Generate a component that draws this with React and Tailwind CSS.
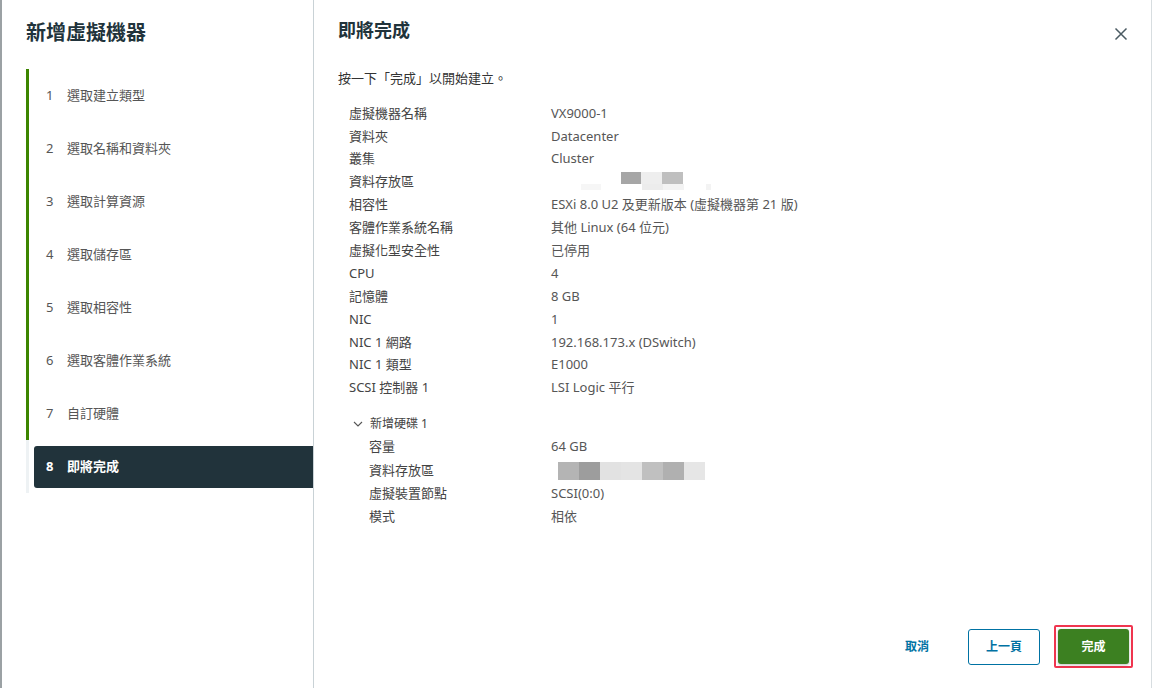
import React from 'react'

const steps = [
  '選取建立類型',
  '選取名稱和資料夾',
  '選取計算資源',
  '選取儲存區',
  '選取相容性',
  '選取客體作業系統',
  '自訂硬體',
  '即將完成',
]

const rows = [
  ['虛擬機器名稱', 'VX9000-1'],
  ['資料夾', 'Datacenter'],
  ['叢集', 'Cluster'],
  ['資料存放區', 'blur1'],
  ['相容性', 'ESXi 8.0 U2 及更新版本 (虛擬機器第 21 版)'],
  ['客體作業系統名稱', '其他 Linux (64 位元)'],
  ['虛擬化型安全性', '已停用'],
  ['CPU', '4'],
  ['記憶體', '8 GB'],
  ['NIC', '1'],
  ['NIC 1 網路', '192.168.173.x (DSwitch)'],
  ['NIC 1 類型', 'E1000'],
  ['SCSI 控制器 1', 'LSI Logic 平行'],
]

const diskRows = [
  ['容量', '64 GB'],
  ['資料存放區', 'blur2'],
  ['虛擬裝置節點', 'SCSI(0:0)'],
  ['模式', '相依'],
]

const Blur1 = () => (
  <div className="relative h-[23px] w-[170px]">
    <div className="absolute left-[70px] top-[1px] flex h-[12px]">
      <div className="w-[20px] bg-[#a6a6a6]" />
      <div className="w-[21px] bg-[#eeeeee]" />
      <div className="w-[21px] bg-[#bfbfbf]" />
    </div>
    <div className="absolute left-[30px] top-[13px] h-[6px] w-[20px] bg-[#f6f6f6]" />
    <div className="absolute left-[91px] top-[13px] h-[6px] w-[21px] bg-[#ececec]" />
    <div className="absolute left-[112px] top-[13px] h-[6px] w-[21px] bg-[#f3f3f3]" />
    <div className="absolute left-[155px] top-[13px] h-[6px] w-[5px] bg-[#f3f3f3]" />
  </div>
)

const Blur2 = () => (
  <div className="ml-[7px] flex h-[18px] w-[147px]">
    <div className="w-[21px] bg-[#b4b4b4]" />
    <div className="w-[21px] bg-[#9d9d9d]" />
    <div className="w-[21px] bg-[#e2e2e2]" />
    <div className="w-[21px] bg-[#e4e4e4]" />
    <div className="w-[21px] bg-[#c0c0c0]" />
    <div className="w-[21px] bg-[#b0b0b0]" />
    <div className="w-[21px] bg-[#e6e6e6]" />
  </div>
)

const Value = ({ v }) => {
  if (v === 'blur1') return <Blur1 />
  if (v === 'blur2') return <Blur2 />
  return <span>{v}</span>
}

export default function App() {
  return (
    <div
      className="flex h-[688px] w-[1153px] overflow-hidden bg-white"
      style={{ fontFamily: '"Noto Sans", "Noto Sans CJK TC", sans-serif' }}
    >
      <div className="w-[2px] shrink-0 bg-[#9ba1a4]" />
      {/* left wizard nav */}
      <div className="flex w-[312px] shrink-0 flex-col border-r border-[#c9d2d6]">
        <h1 className="ml-[24px] mt-[18px] text-[20px] font-bold leading-[30px] text-[#21333b]">
          新增虛擬機器
        </h1>
        <div className="ml-[24px] mt-[21px] flex">
          <div className="flex w-[3px] flex-col">
            <div className="h-[371px] bg-[#3c8500]" />
            <div className="h-[53px] bg-[#eef2f4]" />
          </div>
          <ul className="flex-1">
            {steps.map((s, i) =>
              i === 7 ? (
                <li
                  key={s}
                  className="ml-[5px] mt-[6px] flex h-[42px] items-center rounded-l-[3px] bg-[#21333b] pl-[12px] text-[13px] font-bold text-white"
                >
                  <span className="w-[21px]">{i + 1}</span>
                  <span>{s}</span>
                </li>
              ) : (
                <li
                  key={s}
                  className="flex h-[53px] items-center pl-[17px] text-[13px] text-[#565656]"
                >
                  <span className="w-[21px]">{i + 1}</span>
                  <span>{s}</span>
                </li>
              )
            )}
          </ul>
        </div>
      </div>

      {/* right content */}
      <div className="relative flex flex-1 flex-col border-r border-[#d7dde0] pl-[24px] pr-[18px]">
        <div className="flex items-start justify-between">
          <h2 className="mt-[16px] text-[18px] font-bold leading-[28px] text-[#21333b]">
            即將完成
          </h2>
          <button className="mr-[4px] mt-[26px] text-[#4a5a62]">
            <svg width="16" height="16" viewBox="0 0 16 16" fill="none" stroke="currentColor" strokeWidth="1.5">
              <path d="M2.5 2.5 L13.5 13.5 M13.5 2.5 L2.5 13.5" />
            </svg>
          </button>
        </div>
        <p className="mt-[24px] text-[13px] leading-[20px] text-[#333333]">
          按一下「完成」以開始建立。
        </p>
        <div className="mt-[14px] pl-[11px] text-[13px] text-[#565656]">
          {rows.map(([k, v]) => (
            <div key={k} className="flex h-[22.9px] items-center">
              <span className="w-[202px] text-[#444444]">{k}</span>
              <Value v={v} />
            </div>
          ))}
          <div className="mt-[13px] flex h-[23px] items-center text-[12px] text-[#444444]">
            <svg width="12" height="12" viewBox="0 0 12 12" fill="none" stroke="#565656" strokeWidth="1.1" className="ml-[3px] mr-[6px]">
              <path d="M2 4 L6 8 L10 4" />
            </svg>
            <span>新增硬碟 1</span>
          </div>
          {diskRows.map(([k, v]) => (
            <div key={k} className="flex h-[23.3px] items-center">
              <span className="w-[202px] pl-[20px] text-[#444444]">{k}</span>
              <Value v={v} />
            </div>
          ))}
        </div>

        <div className="mt-auto mb-[20px] flex items-center justify-end gap-[14px]">
          <button className="mr-[25px] text-[12px] font-bold text-[#0072a3]">取消</button>
          <button className="h-[36px] w-[72px] rounded-[3px] border border-[#0072a3] text-[12px] font-bold text-[#0072a3]">
            上一頁
          </button>
          <div className="rounded-[2px] border-2 border-[#f0354f] p-[2px]">
            <button className="h-[35px] w-[71px] rounded-[3px] bg-[#3c8021] text-[12px] font-bold text-white shadow-[0_1px_3px_rgba(0,0,0,0.25)]">
              完成
            </button>
          </div>
        </div>
      </div>
      <div className="w-[1px] shrink-0" />
    </div>
  )
}
